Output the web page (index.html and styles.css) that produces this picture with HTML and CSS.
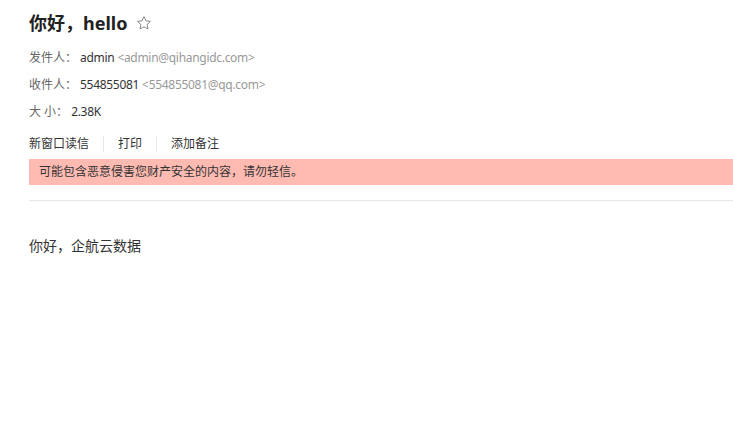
FILE: index.html
```html
<!DOCTYPE html>
<html lang="zh">
<head>
<meta charset="utf-8">
<link rel="stylesheet" href="styles.css">
</head>
<body>
<div class="mail">
  <div class="title-row">
    <h1 class="title">你好，hello</h1>
    <svg class="star" width="16" height="16" viewBox="0 0 24 24"><path d="M12 2.5l2.9 6.2 6.8.8-5 4.7 1.3 6.7L12 17.6l-6 3.3 1.3-6.7-5-4.7 6.8-.8z" fill="none" stroke="#888" stroke-width="1.5" stroke-linejoin="round"/></svg>
  </div>
  <div class="meta">
    <div class="meta-row"><span class="label">发件人：</span><span class="name">admin</span><span class="addr">&lt;admin@qihangidc.com&gt;</span></div>
    <div class="meta-row"><span class="label">收件人：</span><span class="name">554855081</span><span class="addr">&lt;554855081@qq.com&gt;</span></div>
    <div class="meta-row"><span class="label">大&nbsp;小：</span><span class="name">2.38K</span></div>
  </div>
  <div class="actions">
    <span class="action">新窗口读信</span>
    <span class="action">打印</span>
    <span class="action">添加备注</span>
  </div>
  <div class="warning">可能包含恶意侵害您财产安全的内容，请勿轻信。</div>
  <div class="divider"></div>
  <div class="body-text">你好，企航云数据</div>
</div>
</body>
</html>
```
FILE: styles.css
```css
html, body {
  margin: 0;
  padding: 0;
  background: #fff;
}
body {
  font-family: "Noto Sans", "Noto Sans CJK SC", sans-serif;
  color: #333;
}
.mail {
  padding: 10px 0 0 29px;
}
.title-row {
  display: flex;
  align-items: center;
  gap: 9px;
  height: 26px;
}
.title {
  margin: 0;
  font-size: 18px;
  font-weight: bold;
  color: #222;
  line-height: 26px;
}
.star {
  display: block;
}
.meta {
  margin-top: 14px;
  font-size: 12px;
}
.meta-row {
  height: 27px;
  line-height: 16px;
  display: flex;
}
.label {
  color: #666;
  margin-right: 3px;
}
.name {
  color: #333;
  margin-right: 3px;
  letter-spacing: -0.3px;
}
.addr {
  color: #999;
  letter-spacing: -0.3px;
}
.actions {
  display: flex;
  font-size: 12px;
  color: #333;
  margin-top: 5px;
  height: 16px;
  line-height: 16px;
}
.action {
  padding: 0 14px;
  border-left: 1px solid #e6e6e6;
}
.action:first-child {
  padding-left: 0;
  border-left: none;
}
.warning {
  margin-top: 7px;
  background: #ffbbb2;
  height: 26px;
  line-height: 26px;
  padding-left: 10px;
  font-size: 12px;
  color: #333;
}
.divider {
  margin-top: 15px;
  height: 1px;
  background: #e8e8e8;
}
.body-text {
  margin-top: 35px;
  font-size: 14px;
  line-height: 20px;
  color: #333;
}
```
